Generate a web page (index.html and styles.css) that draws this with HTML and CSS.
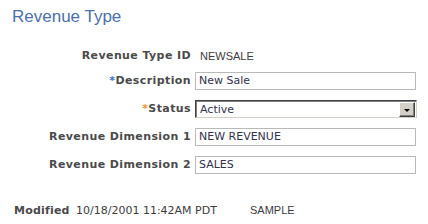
FILE: index.html
```html
<!DOCTYPE html>
<html>
<head>
<meta charset="utf-8">
<link rel="stylesheet" href="styles.css">
</head>
<body>
<div class="page">
  <h1 class="title">Revenue Type</h1>
  <div class="form">
    <div class="label first">Revenue Type ID</div>
    <div class="value first">NEWSALE</div>

    <div class="label"><span class="req">*</span>Description</div>
    <div class="input">New Sale</div>

    <div class="label"><span class="req req-alt">*</span>Status</div>
    <div class="select">
      <span class="select-text">Active</span>
      <span class="select-btn"><span class="arrow"></span></span>
    </div>

    <div class="label">Revenue Dimension 1</div>
    <div class="input">NEW REVENUE</div>

    <div class="label">Revenue Dimension 2</div>
    <div class="input">SALES</div>
  </div>
  <div class="modified">
    <span class="mod-label">Modified</span>
    <span class="mod-date">10/18/2001 11:42AM PDT</span>
    <span class="mod-user">SAMPLE</span>
  </div>
</div>
</body>
</html>
```

FILE: styles.css
```css
html, body {
  margin: 0;
  padding: 0;
  background: #ffffff;
}

.page {
  width: 428px;
  height: 224px;
  overflow: hidden;
}

.title {
  margin: 0;
  padding: 7px 0 0 12px;
  font-family: "Liberation Sans", Arial, sans-serif;
  font-weight: normal;
  font-size: 17px;
  line-height: 20px;
  color: #4b6fad;
}

.form {
  display: grid;
  grid-template-columns: 191px 221px;
  column-gap: 4px;
  row-gap: 10px;
  margin-top: 22px;
  align-items: end;
}

.label {
  justify-self: end;
  font-family: "DejaVu Sans", Verdana, sans-serif;
  font-weight: bold;
  font-size: 11px;
  letter-spacing: 0.4px;
  line-height: 14px;
  color: #4a4a4a;
  white-space: nowrap;
  padding-bottom: 2px;
}

.first {
  margin-bottom: -3px;
}

.req {
  color: #3a6fc4;
}

.req-alt {
  color: #e8932c;
}

.value {
  font-family: "Liberation Sans", Arial, sans-serif;
  font-size: 11px;
  line-height: 14px;
  color: #3c3c3c;
  padding: 0 0 2px 5px;
}

.input {
  box-sizing: border-box;
  height: 18px;
  border: 1px solid #b9b9b9;
  background: #fff;
  font-family: "DejaVu Sans", Verdana, sans-serif;
  font-size: 11px;
  line-height: 16px;
  color: #33334d;
  padding: 0 3px;
}

.select {
  box-sizing: border-box;
  height: 18px;
  width: 222px;
  display: flex;
  align-items: stretch;
  border: 1px solid #404040;
  border-right-color: #d4d0c8;
  border-bottom-color: #d4d0c8;
  box-shadow: inset 1px 1px 0 #808080;
  background: #fff;
  font-family: "DejaVu Sans", Verdana, sans-serif;
  font-size: 11px;
  line-height: 15px;
  color: #33334d;
}

.select-text {
  flex: 1;
  padding: 1px 0 0 4px;
}

.select-btn {
  box-sizing: border-box;
  width: 16px;
  margin: 1px 1px 0 0;
  background: #d4d0c8;
  border: 1px solid;
  border-color: #ffffff #404040 #404040 #ffffff;
  box-shadow: inset -1px -1px 0 #808080;
  display: flex;
  align-items: center;
  justify-content: center;
}

.arrow {
  width: 0;
  height: 0;
  border-left: 3px solid transparent;
  border-right: 3px solid transparent;
  border-top: 3px solid #000;
  margin-top: 1px;
}

.modified {
  display: flex;
  align-items: baseline;
  margin-top: 29px;
  padding-left: 14px;
  font-size: 11px;
  line-height: 14px;
}

.mod-label {
  font-family: "DejaVu Sans", Verdana, sans-serif;
  font-weight: bold;
  letter-spacing: 0.2px;
  color: #4a4a4a;
  width: 62px;
}

.mod-date {
  font-family: "DejaVu Sans", Verdana, sans-serif;
  color: #3c3c3c;
  width: 174px;
}

.mod-user {
  font-family: "Liberation Sans", Arial, sans-serif;
  color: #3c3c3c;
}
```
